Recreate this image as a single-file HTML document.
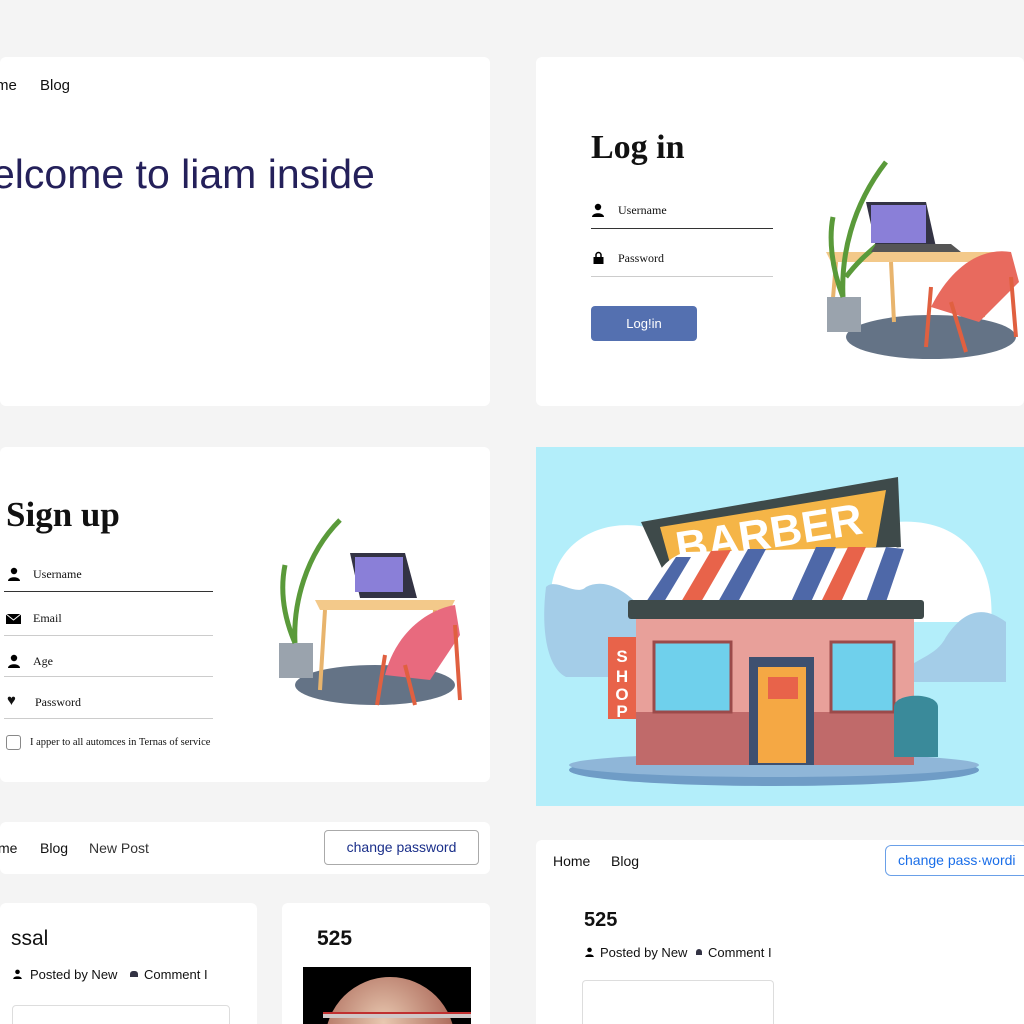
<!DOCTYPE html>
<html style="width:1024px;height:1024px;overflow:hidden"><head><meta charset="utf-8"><style>
*{margin:0;padding:0;box-sizing:border-box}
body{width:1024px;height:1024px;background:#f4f4f4;position:relative;overflow:hidden;font-family:"Liberation Sans",sans-serif;color:#111}
.card{position:absolute;background:#fff;border-radius:6px;overflow:hidden}
.abs{position:absolute;white-space:nowrap}
.serif{font-family:"Liberation Serif",serif}
.line{position:absolute;height:1px;background:#ccc}
</style></head><body>

<div class="card" style="left:0;top:57px;width:490px;height:349px">
 <div class="abs" style="left:-4px;top:20px;font-size:15px">me</div>
 <div class="abs" style="left:40px;top:20px;font-size:15px">Blog</div>
 <div class="abs" style="left:-8px;top:94px;font-size:41px;color:#24205a">elcome to liam inside</div>
</div>

<div class="card" style="left:536px;top:57px;width:488px;height:349px">
 <div class="abs serif" style="left:55px;top:72px;font-size:34px;font-weight:bold">Log in</div>
 <svg class="abs" style="left:56px;top:146px" width="12" height="14" viewBox="0 0 12 14"><circle cx="6" cy="4" r="3.2"/><path d="M0 14c0-5 12-5 12 0z"/></svg>
 <div class="abs serif" style="left:82px;top:146px;font-size:12px">Username</div>
 <div class="line" style="left:55px;top:171px;width:182px;background:#333"></div>
 <svg class="abs" style="left:57px;top:194px" width="11" height="13" viewBox="0 0 11 13"><path d="M3 6V4a2.5 2.5 0 015 0v2" stroke="#000" stroke-width="1.5" fill="none"/><rect x="0.5" y="6" width="10" height="7"/></svg>
 <div class="abs serif" style="left:82px;top:194px;font-size:12px">Password</div>
 <div class="line" style="left:55px;top:219px;width:182px"></div>
 <div class="abs" style="left:55px;top:249px;width:106px;height:35px;background:#5470b0;border-radius:4px;color:#fff;font-size:13px;text-align:center;line-height:35px">Log!in</div>
 <svg class="abs" style="left:285px;top:100px" width="203" height="215" viewBox="0 0 203 215">
  <ellipse cx="110" cy="180" rx="85" ry="22" fill="#3d5068" opacity=".8"/>
  <path d="M5 95h170l-5 10H10z" fill="#f3c98a"/>
  <path d="M15 105l-5 60M70 105l3 60M165 105l-3 55" stroke="#e8b46d" stroke-width="4"/>
  <rect x="6" y="140" width="34" height="35" fill="#9aa3ad"/>
  <path d="M22 140C20 100 30 50 65 5M22 140C10 110 8 80 12 60M25 120c15-20 30-30 40-40" stroke="#5a9a3a" stroke-width="5" fill="none"/>
  <path d="M45 45h60l10 45H55z" fill="#334"/><rect x="50" y="48" width="55" height="38" fill="#8a7fd8"/>
  <path d="M50 95h90l-10-8H55z" fill="#555"/>
  <path d="M110 150c20-40 50-60 80-55l8 30-40 40z" fill="#e86a5e"/>
  <path d="M110 130l-5 60M190 120l5 60M130 145l15 50" stroke="#e06040" stroke-width="4"/>
 </svg>
</div>

<div class="card" style="left:0;top:447px;width:490px;height:335px">
 <div class="abs serif" style="left:6px;top:48px;font-size:35px;font-weight:bold">Sign up</div>
 <svg class="abs" style="left:8px;top:120px" width="12" height="14" viewBox="0 0 12 14"><circle cx="6" cy="4" r="3.2"/><path d="M0 14c0-5 12-5 12 0z"/></svg>
 <div class="abs serif" style="left:33px;top:120px;font-size:12px">Username</div>
 <div class="line" style="left:4px;top:144px;width:209px;background:#333"></div>
 <svg class="abs" style="left:6px;top:167px" width="15" height="10" viewBox="0 0 15 10"><rect width="15" height="10"/><path d="M0 0l7.5 6L15 0" stroke="#fff" fill="none"/></svg>
 <div class="abs serif" style="left:33px;top:164px;font-size:12px">Email</div>
 <div class="line" style="left:4px;top:188px;width:209px"></div>
 <svg class="abs" style="left:8px;top:207px" width="12" height="14" viewBox="0 0 12 14"><circle cx="6" cy="4" r="3.2"/><path d="M0 14c0-5 12-5 12 0z"/></svg>
 <div class="abs serif" style="left:33px;top:207px;font-size:12px">Age</div>
 <div class="line" style="left:4px;top:229px;width:209px"></div>
 <div class="abs" style="left:7px;top:245px;font-size:15px">♥</div>
 <div class="abs serif" style="left:35px;top:248px;font-size:12px">Password</div>
 <div class="line" style="left:4px;top:271px;width:209px"></div>
 <div class="abs" style="left:6px;top:288px;width:15px;height:15px;border:1px solid #888;border-radius:3px"></div>
 <div class="abs serif" style="left:30px;top:290px;font-size:10.5px">I apper to all automces in Ternas of service</div>
 <svg class="abs" style="left:275px;top:68px" width="190" height="195" viewBox="0 0 190 195">
  <ellipse cx="100" cy="170" rx="80" ry="20" fill="#3d5068" opacity=".8"/>
  <path d="M40 85h140l-5 10H45z" fill="#f3c98a"/>
  <path d="M50 95l-5 80M160 95l-3 55" stroke="#e8b46d" stroke-width="4"/>
  <rect x="4" y="128" width="34" height="35" fill="#9aa3ad"/>
  <path d="M20 128C18 90 30 40 65 5M20 128C8 100 5 75 10 50" stroke="#5a9a3a" stroke-width="5" fill="none"/>
  <path d="M75 38h55l12 45H85z" fill="#334"/><rect x="80" y="42" width="48" height="35" fill="#8a7fd8"/>
  <path d="M110 160c10-40 40-65 70-70l5 30-30 45z" fill="#e86a7e"/>
  <path d="M110 140l-8 50M180 110l5 75M130 150l10 40" stroke="#e06040" stroke-width="4"/>
 </svg>
</div>

<div class="card" style="left:536px;top:447px;width:488px;height:359px;background:#b3eefa;border-radius:0">
 <svg width="488" height="360" viewBox="0 0 488 360">
  <path d="M15 160C10 100 60 70 110 80L130 75 360 75C430 70 460 120 455 175L15 175z" fill="#fff"/>
  <path d="M10 140c10-10 30 10 40 0 20-10 40 5 55 20v70H30C10 220 5 180 10 140z" fill="#a4cde8"/>
  <path d="M360 230c20-20 40-20 50-40 20-30 40-30 60-15v60H365z" fill="#a4cde8"/>
  <ellipse cx="238" cy="323" rx="205" ry="16" fill="#6f9cc6"/>
  <ellipse cx="238" cy="318" rx="205" ry="12" fill="#8fb6d8"/>
  <path d="M105 75L362 30L365 100L130 130z" fill="#3e4a4a"/>
  <path d="M124 80L350 43L340 100L135 120z" fill="#f5b547"/>
  <text x="138" y="100" font-family="Liberation Sans" font-weight="bold" font-size="44" fill="#fff" transform="rotate(-9 240 80)">BARBER</text>
  <path d="M110 155C115 130 130 110 150 105L360 100C380 105 378 150 370 155z" fill="#fff"/>
  <g fill="#4e68a8"><path d="M110 155L140 110 155 110 128 155z"/><path d="M182 155L212 102 230 102 202 155z"/><path d="M255 155L280 100 300 100 275 155z"/><path d="M330 155L350 100 368 102 350 155z"/></g>
  <g fill="#e8634a"><path d="M145 155L175 104 195 103 165 155z"/><path d="M285 155L312 100 330 100 305 155z"/></g>
  <rect x="92" y="153" width="296" height="19" rx="3" fill="#3e4a4a"/>
  <rect x="100" y="172" width="278" height="146" fill="#e8a09a"/>
  <rect x="100" y="265" width="278" height="53" fill="#c06a6a"/>
  <rect x="118" y="195" width="77" height="70" fill="#6fd0ec" stroke="#9b4a4a" stroke-width="3"/>
  <rect x="295" y="195" width="63" height="70" fill="#6fd0ec" stroke="#9b4a4a" stroke-width="3"/>
  <rect x="213" y="210" width="65" height="108" fill="#3e5070"/>
  <rect x="222" y="220" width="48" height="96" fill="#f5a844"/>
  <rect x="232" y="230" width="30" height="22" fill="#e8634a"/>
  <rect x="72" y="190" width="28" height="82" fill="#e8634a"/>
  <text x="86" y="215" font-family="Liberation Sans" font-weight="bold" font-size="17" fill="#fff" text-anchor="middle">S</text>
  <text x="86" y="235" font-family="Liberation Sans" font-weight="bold" font-size="17" fill="#fff" text-anchor="middle">H</text>
  <text x="86" y="253" font-family="Liberation Sans" font-weight="bold" font-size="17" fill="#fff" text-anchor="middle">O</text>
  <text x="86" y="270" font-family="Liberation Sans" font-weight="bold" font-size="17" fill="#fff" text-anchor="middle">P</text>
  <path d="M358 260c0-15 44-15 44 0v50h-44z" fill="#3a8a9a"/>
 </svg>
</div>

<div class="card" style="left:0;top:822px;width:490px;height:52px">
 <div class="abs" style="left:-2px;top:18px;font-size:14px">me</div>
 <div class="abs" style="left:40px;top:18px;font-size:14px">Blog</div>
 <div class="abs" style="left:89px;top:18px;font-size:14px;color:#333">New Post</div>
 <div class="abs" style="left:324px;top:8px;width:155px;height:35px;border:1px solid #aaa;border-radius:4px;color:#1a2f8a;font-size:14px;text-align:center;line-height:33px">change password</div>
</div>

<div class="card" style="left:0;top:903px;width:257px;height:130px">
 <div class="abs" style="left:11px;top:24px;font-size:21px">ssal</div>
 <svg class="abs" style="left:13px;top:66px" width="9" height="10" viewBox="0 0 12 14"><circle cx="6" cy="4" r="3.2"/><path d="M0 14c0-5 12-5 12 0z"/></svg>
 <div class="abs" style="left:30px;top:64px;font-size:13px">Posted by New</div>
 <div class="abs" style="left:130px;top:68px;width:8px;height:6px;background:#334;border-radius:3px 3px 0 0"></div>
 <div class="abs" style="left:144px;top:64px;font-size:13px">Comment I</div>
 <div class="abs" style="left:12px;top:102px;width:218px;height:40px;border:1px solid #ddd;border-radius:4px"></div>
</div>

<div class="card" style="left:282px;top:903px;width:208px;height:130px">
 <div class="abs" style="left:35px;top:24px;font-size:21px;font-weight:bold">525</div>
 <div class="abs" style="left:21px;top:64px;width:168px;height:70px;background:#000;overflow:hidden">
  <div style="position:absolute;left:22px;top:10px;width:130px;height:130px;border-radius:50%;background:radial-gradient(circle at 45% 35%,#e8c8b0,#b07060 60%,#301010)"></div>
  <div style="position:absolute;left:20px;top:45px;width:150px;height:6px;background:#d0c8c8;border-top:2px solid #c03030"></div>
 </div>
</div>

<div class="card" style="left:536px;top:840px;width:488px;height:190px;overflow:visible">
 <div class="abs" style="left:17px;top:13px;font-size:14px">Home</div>
 <div class="abs" style="left:75px;top:13px;font-size:14px">Blog</div>
 <div class="abs" style="left:349px;top:5px;width:150px;height:31px;border:1px solid #6aa0e8;border-radius:6px;color:#1a6ee8;font-size:14px;padding-left:12px;line-height:29px">change pass·wordi</div>
 <div class="abs" style="left:48px;top:69px;font-size:20px;font-weight:bold">525</div>
 <svg class="abs" style="left:49px;top:107px" width="9" height="10" viewBox="0 0 12 14"><circle cx="6" cy="4" r="3.2"/><path d="M0 14c0-5 12-5 12 0z"/></svg>
 <div class="abs" style="left:64px;top:105px;font-size:13px">Posted by New</div>
 <div class="abs" style="left:160px;top:109px;width:6px;height:6px;background:#334;border-radius:3px 3px 0 0"></div>
 <div class="abs" style="left:172px;top:105px;font-size:13px">Comment I</div>
 <div class="abs" style="left:46px;top:140px;width:192px;height:44px;border:1px solid #ddd;border-bottom:none;border-radius:4px 4px 0 0"></div>
</div>
</body></html>
